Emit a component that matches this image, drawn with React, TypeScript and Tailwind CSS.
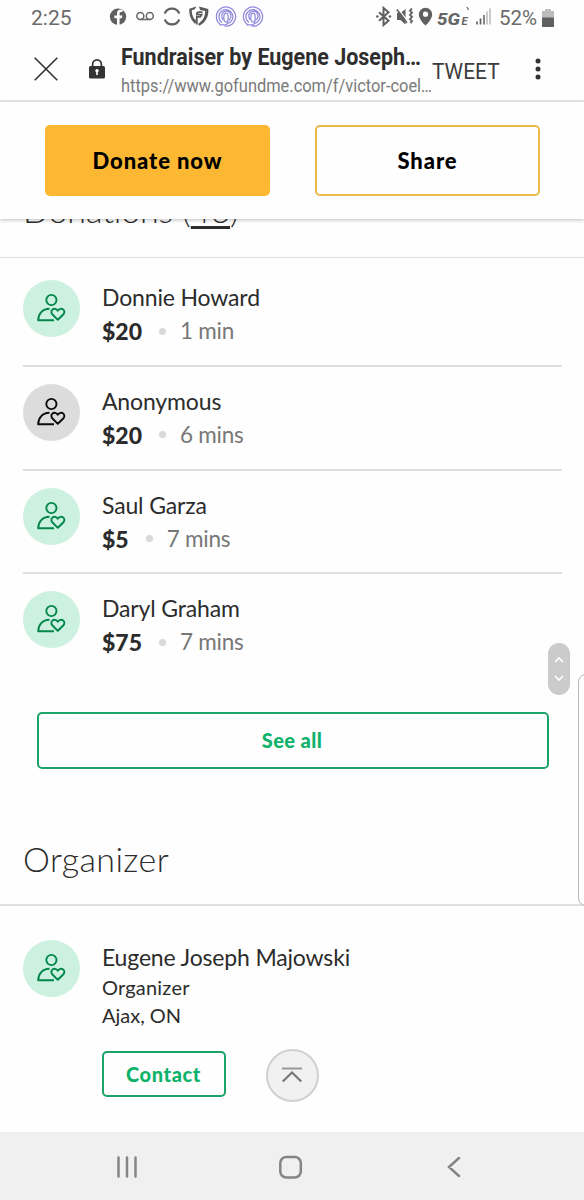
import React from "react";

type Donation = { name: string; amount: string; time: string; anonymous?: boolean };

const donations: Donation[] = [
  { name: "Donnie Howard", amount: "$20", time: "1 min" },
  { name: "Anonymous", amount: "$20", time: "6 mins", anonymous: true },
  { name: "Saul Garza", amount: "$5", time: "7 mins" },
  { name: "Daryl Graham", amount: "$75", time: "7 mins" },
];

function Avatar({ anonymous = false }: { anonymous?: boolean }) {
  return (
    <div
      className={
        anonymous
          ? "flex h-[57px] w-[57px] shrink-0 items-center justify-center rounded-full bg-[#dcdcdc] text-[#0c0c0c]"
          : "flex h-[57px] w-[57px] shrink-0 items-center justify-center rounded-full bg-[#ccf1e0] text-[#02864a]"
      }
    >
      <svg width="57" height="57" viewBox="0 0 57 57" fill="none" stroke="currentColor" strokeWidth="1.9">
        <circle cx="28.4" cy="20" r="5.1" />
        <path d="M31 40.300H15.200c.1-6.600 4.300-11.300 11.300-11.500" strokeLinejoin="round" />
        <path
          d="M34.800 39.800l-5.300-5.300c-1.500-1.500-1.500-3.700-.1-4.900 1.500-1.400 4.100-1 5.400 1.100 1.400-2.100 4-2.500 5.500-1.100 1.400 1.200 1.400 3.400-.1 4.900z"
          strokeLinejoin="round"
        />
      </svg>
    </div>
  );
}

function StatusBar() {
  return (
    <div className="flex h-9 items-center pl-[31px] font-['Roboto',sans-serif] text-[#6b6b6b]">
      <span className="w-[77px] text-[21px] leading-none">2:25</span>
      <svg width="160" height="36" viewBox="108 0 160 36" fill="none" className="shrink-0">
        <circle cx="118" cy="16.800" r="8.200" fill="#606060" />
        <path d="M117 25v-6.800h-2.600v-2.700h2.600v-2c0-2.600 1.600-3.900 3.900-3.900h1.600V12h-1.200c-1.300 0-1.700.6-1.700 1.700v1.800h2.800l-.4 2.700h-2.400V25z" fill="#fff" />
        <g stroke="#666" strokeWidth="1.500">
          <circle cx="140.300" cy="16" r="3.500" />
          <circle cx="149.800" cy="16" r="3.500" />
          <path d="M140.300 19.500h9.500" />
        </g>
        <path d="M164.700 13.500a7.900 7.900 0 0 1 14.600 0M164.700 19.500a7.900 7.900 0 0 0 14.600 0" stroke="#606060" strokeWidth="2.100" />
        <path d="M189.300 8.800l7-2.200-1.700 2.900-2.800.6c0 3 .5 5.400 1.800 7.800l2.600 2.800-1 3.200c-4.300-3.600-6.300-8.700-5.900-15.100z" fill="#5b5b5b" />
        <path d="M199 6.600l9.300 2.400c.6 7.200-2.200 13.200-9 16.800l-1.300-1.900c4.800-3 7-7 7.200-12.800l-5.200-1.200z" fill="#5b5b5b" />
        <path d="M196.800 24.500v-7.700h3.500l1.300-2.200h-4.800c0-1.700.6-2.500 2-2.500h3.700" stroke="#5b5b5b" strokeWidth="1.800" />
        {[226, 253].map((x) => (
          <g key={x} stroke="#9187dc" strokeWidth="1.250">
            <path d={`M${x - 5} 24.800a9.600 9.600 0 1 1 5 1.400h-1.500`} />
            <path d={`M${x - 4} 22.500a7 7 0 1 1 5.500 1M${x - 2.500} 20a4.600 5 0 1 1 5 .5`} />
            <ellipse cx={x} cy="17.500" rx="2.200" ry="4.500" />
            <path d={`M${x - 6.500} 24.800h5.500c1.800 0 2.800-1.500 3-3.500`} />
          </g>
        ))}
      </svg>
      <svg width="126" height="36" viewBox="368 0 126 36" fill="none" className="ml-[100px] shrink-0">
        <path d="M379 12.300l9.500 8.400-5 4.300V8l5 4.300-9.500 8.400" stroke="#606060" strokeWidth="2" />
        <circle cx="377.300" cy="16.500" r="1.300" fill="#606060" />
        <circle cx="390" cy="16.500" r="1.300" fill="#606060" />
        <path d="M397 13h3.500l5-4v15.500l-5-4.500H397z" fill="#606060" />
        <path d="M398.300 8.800l9.500 12.500" stroke="#fff" strokeWidth="1.200" />
        <path d="M396.900 9.400l10 13.500" stroke="#606060" strokeWidth="1.700" />
        <path d="M412 8.500l-2 2.200 2 2-2 2.200 2 2-2 2.200 2 2-1.500 2" stroke="#666" strokeWidth="1.900" />
        <path d="M425.500 7.700a6.700 6.700 0 0 0-6.700 6.700c0 4.900 6.700 11.100 6.700 11.100s6.700-6.200 6.700-11.100a6.700 6.700 0 0 0-6.700-6.700z" fill="#606060" />
        <circle cx="425.500" cy="14.200" r="2.600" fill="#fff" />
        <text x="437" y="24.500" fontSize="16" fontWeight="800" fontStyle="italic" fill="#666" textLength="23" lengthAdjust="spacingAndGlyphs" fontFamily="Roboto">5G</text>
        <text x="461.500" y="24.700" fontSize="11" fontWeight="700" fontStyle="italic" fill="#666" fontFamily="Roboto">E</text>
        <path d="M466.800 7l1.800 2.900" stroke="#666" strokeWidth="1.200" />
        <g strokeWidth="1.700">
          <path d="M477 21.500v3M480.500 18.500v6" stroke="#606060" />
          <path d="M484 15v9.500" stroke="#707070" />
          <path d="M487 11.500v13M490 8.500v16" stroke="#c2c2c2" />
        </g>
      </svg>
      <span className="ml-[5px] w-[43px] text-[20.5px] leading-none">52%</span>
      <svg width="12" height="18" viewBox="0 0 12 18" className="shrink-0">
        <path d="M3 0h6v2h3v16H0V2h3z" fill="#bdbdbd" />
        <path d="M0 8.500h12V17a1 1 0 0 1-1 1H1a1 1 0 0 1-1-1z" fill="#606060" />
      </svg>
    </div>
  );
}

function BrowserBar() {
  return (
    <header className="flex h-[66px] items-center border-b-2 border-[#ebebeb] pl-[34px] font-['Roboto',sans-serif]">
      <svg width="24" height="24" viewBox="0 0 24 24" fill="none" stroke="#333" strokeWidth="1.600" className="mt-px shrink-0">
        <path d="M.7.700l22.600 22.600M23.300.700L.7 23.300" />
      </svg>
      <svg width="16" height="20" viewBox="0 0 16 20" className="mt-[2px] ml-[31px] shrink-0">
        <path d="M3.600 8V5.300a4.400 4.400 0 0 1 8.800 0V8" fill="none" stroke="#333" strokeWidth="1.700" />
        <rect y="7" width="16" height="12.500" rx="1.500" fill="#333" />
        <circle cx="8" cy="11.700" r="1.700" fill="#fff" />
        <path d="M7.200 12h1.600v4H7.200z" fill="#fff" />
      </svg>
      <div className="ml-4 w-[311px] shrink-0 pt-[5px] whitespace-nowrap">
        <div className="h-[30px] text-[24px] leading-[29px] font-bold text-[#2e2e2e]">
          <span className="inline-block origin-left scale-x-[0.895]">Fundraiser by Eugene Joseph…</span>
        </div>
        <div className="h-[26px] text-[19px] leading-[26px] text-[#7a7a7a]">
          <span className="inline-block origin-left scale-x-[0.864]">https://www.gofundme.com/f/victor-coel…</span>
        </div>
      </div>
      <span className="w-[103px] shrink-0 pt-[7px] text-[22px] leading-none text-[#3c3c3c]">
        <span className="inline-block origin-left scale-x-[0.95]">TWEET</span>
      </span>
      <svg width="6" height="22" viewBox="0 0 6 22" fill="#333" className="mt-px shrink-0">
        <circle cx="3" cy="3" r="2.500" />
        <circle cx="3" cy="11" r="2.500" />
        <circle cx="3" cy="19" r="2.500" />
      </svg>
    </header>
  );
}

export default function App() {
  return (
    <div className="relative flex h-[1200px] w-[584px] flex-col overflow-hidden bg-[#fefefe] font-['Lato',sans-serif] text-[#2c2c2c]">
      <StatusBar />
      <BrowserBar />

      <div className="relative z-10 flex h-[117px] shrink-0 gap-[45px] bg-[#fefefe] pt-[23px] pl-[45px] shadow-[0_1px_4px_rgba(0,0,0,0.25)]">
        <button className="h-[71px] w-[225px] rounded-[5px] bg-[#fdb833] text-[22px] font-black tracking-[0.9px] text-black">Donate now</button>
        <button className="h-[71px] w-[225px] rounded-[5px] border-2 border-[#e9b949] text-[22px] font-black tracking-[0.9px] text-black">Share</button>
      </div>

      <div className="flex h-[39px] shrink-0 items-end border-b border-[#dcdcdc] pl-[23px]">
        <h2 className="h-[68px] text-[34px] leading-[42px] font-light tracking-[-0.1px]">
          Donations (<span className="underline decoration-[3px] underline-offset-[3px]">46</span>)
        </h2>
      </div>

      <ul className="mr-[22px] ml-[23px] flex h-[419px] shrink-0 flex-col pt-[5.4px]">
        {donations.map((d, i) => (
          <li
            key={d.name}
            className={
              i < donations.length - 1
                ? "flex h-[103.6px] shrink-0 gap-[22px] border-b-2 border-[#dedede] pt-[17px]"
                : "flex h-[103.6px] shrink-0 gap-[22px] pt-[17px]"
            }
          >
            <Avatar anonymous={d.anonymous} />
            <div>
              <div className="text-[23px] leading-[34px] tracking-[-0.15px]">{d.name}</div>
              <div className="flex items-center text-[23px] leading-[34px]">
                <span className="font-black">{d.amount}</span>
                <span className="mr-[14px] ml-[17px] h-[7px] w-[7px] rounded-full bg-[#d9d9d9]" />
                <span className="text-[22.5px] tracking-[-0.25px] text-[#777]">{d.time}</span>
              </div>
            </div>
          </li>
        ))}
      </ul>

      <button className="mt-[35px] ml-[37px] h-[57px] w-[512px] shrink-0 rounded-[5px] border-2 border-[#1ba36a] pr-[2px] pb-[2px] text-[20px] font-black tracking-[0.4px] text-[#0eb26b]">
        See all
      </button>

      <div className="mt-[69px] h-[68px] shrink-0 border-b-2 border-[#e0e0e0] pl-[23px]">
        <h2 className="text-[34px] leading-[42px] font-light tracking-[0.4px]">Organizer</h2>
      </div>

      <section className="flex h-[226px] shrink-0 gap-[22px] pt-[34px] pl-[23px]">
        <Avatar />
        <div>
          <div className="text-[23px] leading-[34px] tracking-[-0.17px]">Eugene Joseph Majowski</div>
          <div className="text-[20px] leading-[27px] tracking-[0.2px]">Organizer</div>
          <div className="text-[20px] leading-[28px]">Ajax, ON</div>
          <button className="mt-[22px] h-[46px] w-[124px] rounded-[5px] border-2 border-[#1ba36a] pr-px text-[20px] font-black tracking-[0.6px] text-[#0eb26b]">
            Contact
          </button>
        </div>
      </section>

      <nav className="flex h-[68px] shrink-0 items-center bg-[#f0f0f0] pt-px">
        <svg width="584" height="30" viewBox="0 1152 584 30" fill="none" stroke="#858585" strokeWidth="2.500" strokeLinecap="round">
          <path d="M118.500 1157.500v19M127 1157.500v19M135.500 1157.500v19M459 1158l-10 9 10 9" />
          <rect x="280.300" y="1157" width="20.500" height="20.500" rx="6" />
        </svg>
      </nav>

      <div className="absolute top-[643px] left-[548px] flex h-[52px] w-[22px] items-center justify-center rounded-full bg-[#cbcbcb]">
        <svg width="22" height="52" viewBox="0 0 22 52" fill="none" stroke="#fff" strokeWidth="1.700">
          <path d="M7 19l4-4 4 4M7 33l4 4 4-4" />
        </svg>
      </div>
      <div className="absolute top-[674px] left-[578px] h-[232px] w-[20px] rounded-[8px] border border-[#b5b5b5] bg-[#fefefe]" />
      <div className="absolute top-[1048.5px] left-[265.5px] flex h-[53px] w-[53px] items-center justify-center rounded-full border-2 border-[#d0d0d0] bg-[#f1f1f1]">
        <svg width="20" height="16" viewBox="0 0 20 16" fill="none" strokeWidth="2">
          <path d="M0 1.500h20" stroke="#999" />
          <path d="M.8 14.500L10 5.500l9.200 9" stroke="#777" strokeWidth="2.200" />
        </svg>
      </div>
    </div>
  );
}
